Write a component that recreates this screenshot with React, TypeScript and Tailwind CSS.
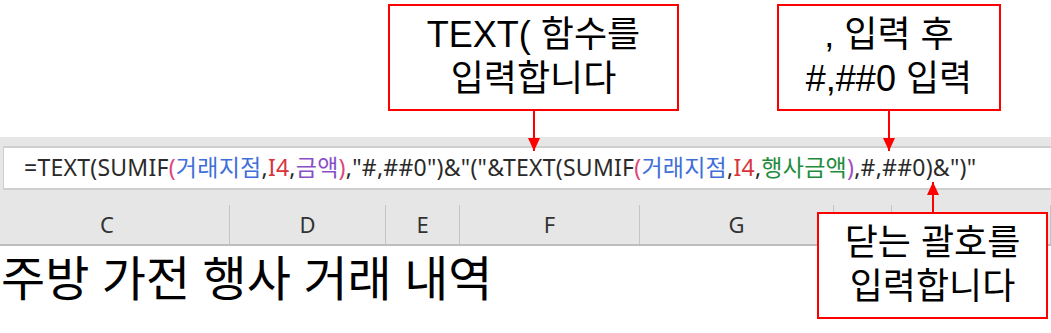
import React from "react";

const RED = "#ff0000";

// Formula pieces, coloured the way Excel tints ranges inside the formula bar.
const formula: { t: string; c?: string }[] = [
  { t: "=TEXT(SUMIF" },
  { t: "(", c: "#e0457b" },
  { t: "거래지점", c: "#3f6fd8" },
  { t: "," },
  { t: "I4", c: "#d8343c" },
  { t: "," },
  { t: "금액", c: "#8a4fc8" },
  { t: ")", c: "#e0457b" },
  { t: ',"#,##0")&"("&TEXT(SUMIF' },
  { t: "(", c: "#e0457b" },
  { t: "거래지점", c: "#3f6fd8" },
  { t: "," },
  { t: "I4", c: "#d8343c" },
  { t: "," },
  { t: "행사금액", c: "#1e8c3c" },
  { t: ")", c: "#a24fc0" },
  { t: ',#,##0)&")"' },
];

const columns = [
  { name: "C", w: "w-[245px] -ml-[15px]" },
  { name: "D", w: "w-[156px]" },
  { name: "E", w: "w-[74px]" },
  { name: "F", w: "w-[180px]" },
  { name: "G", w: "w-[194px]" },
  { name: "", w: "w-[58px]" },
  { name: "", w: "flex-1" },
];

function Box({ lines, className }: { lines: [string, string]; className: string }) {
  return (
    <div
      className={`flex h-[107px] flex-col items-center justify-center border-2 border-[#ff0000] bg-white pb-[2px] text-[36px] leading-[44px] whitespace-pre text-black ${className}`}
      style={{ fontFamily: '"Liberation Sans", "Noto Sans CJK KR", sans-serif' }}
    >
      <p>{lines[0]}</p>
      <p>{lines[1]}</p>
    </div>
  );
}

// A red leader line with a filled arrowhead at one end.
function Arrow({ h, up = false }: { h: number; up?: boolean }) {
  const tip = up ? 0 : h;
  const base = up ? 13 : h - 13;
  return (
    <svg className="shrink-0" width={14} height={h}>
      <line x1={7} y1={0} x2={7} y2={h} stroke={RED} strokeWidth={2} />
      <polygon points={`1,${base} 13,${base} 7,${tip}`} fill={RED} />
    </svg>
  );
}

export default function App() {
  return (
    <div
      className="relative h-[333px] w-[1051px] overflow-hidden bg-white"
      style={{ fontFamily: '"Noto Sans", "Noto Sans CJK KR", sans-serif' }}
    >
      {/* callouts above the formula bar; their arrows reach down into it */}
      <div className="relative z-10 flex h-[137px] items-start gap-[98px] pl-[388px] pt-[4px]">
        <div className="flex flex-col items-center">
          <Box lines={["TEXT( 함수를", "입력합니다"]} className="w-[291px]" />
          <Arrow h={40} />
        </div>
        <div className="flex flex-col items-center">
          <Box lines={[", 입력 후", "#,##0 입력"]} className="w-[224px]" />
          <Arrow h={40} />
        </div>
      </div>

      {/* formula bar */}
      <div className="bg-[#e6e6e6] pt-[9px]">
        <div className="ml-[3px] flex h-[44px] items-center border-y-2 border-l border-[#cfcfcf] bg-white pb-[2px] pl-[20px] text-[23px] tracking-[0.25px] whitespace-pre text-[#2a2a2a]">
          {formula.map((p, i) => (
            <span key={i} style={p.c ? { color: p.c } : undefined}>
              {p.t}
            </span>
          ))}
        </div>
        <div className="h-[15px]" />
      </div>

      {/* column headers */}
      <div className="flex h-[41px] border-b-2 border-[#bdbdbd] bg-[#e6e6e6] text-[22px] text-[#333]">
        {columns.map((c, i) => (
          <div
            key={i}
            className={`flex shrink-0 items-center justify-center border-r border-[#c4c4c4] ${c.w}`}
          >
            {c.name}
          </div>
        ))}
      </div>

      <div className="pl-[1px] pt-[4px] text-[48px] leading-[56px] text-black">
        주방 가전 행사 거래 내역
      </div>

      {/* third callout sits over the header row, pointing up at the closing ")" */}
      <div className="absolute left-[817px] top-[182px] flex flex-col items-center">
        <Arrow h={30} up />
        <Box lines={["닫는 괄호를", "입력합니다"]} className="w-[231px]" />
      </div>
    </div>
  );
}
